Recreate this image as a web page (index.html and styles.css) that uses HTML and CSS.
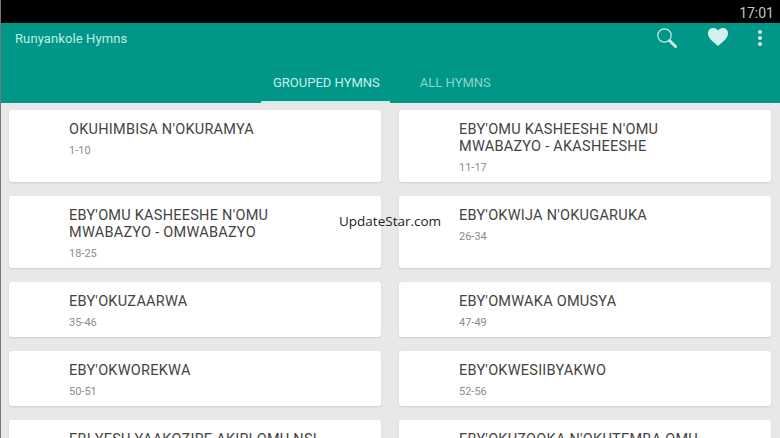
FILE: index.html
```html
<!DOCTYPE html>
<html lang="en">
<head>
    <meta charset="UTF-8">
    <meta name="viewport" content="width=device-width, initial-scale=1.0">
    <title>Runyankole Hymns</title>
    <link rel="stylesheet" href="styles.css">
</head>
<body>
    <div class="status-bar">
        <span class="clock">17:01</span>
    </div>

    <header class="app-bar">
        <div class="toolbar">
            <span class="app-title">Runyankole Hymns</span>
            <div class="actions">
                <svg class="icon-search" viewBox="0 0 20 20" width="20" height="20">
                    <circle cx="7.5" cy="7.5" r="6.7" fill="none" stroke="#c8ebe6" stroke-width="1.2"/>
                    <path d="M12.5 12.5 L18.5 18.5" stroke="#c8ebe6" stroke-width="3" stroke-linecap="round"/>
                </svg>
                <svg class="icon-heart" viewBox="0 0 20 18" width="20" height="18">
                    <path d="M10 18 C4 13 0 10 0 5.2 C0 2 2.4 0 5.2 0 C7.2 0 9 1 10 2.8 C11 1 12.8 0 14.8 0 C17.6 0 20 2 20 5.2 C20 10 16 13 10 18 Z" fill="#d4f0ec"/>
                </svg>
                <div class="icon-more">
                    <span class="dot"></span>
                    <span class="dot"></span>
                    <span class="dot"></span>
                </div>
            </div>
        </div>
        <nav class="tabs">
            <a class="tab tab-active">GROUPED HYMNS</a>
            <a class="tab">ALL HYMNS</a>
        </nav>
    </header>

    <main class="hymn-grid">
        <div class="card card-tall">
            <div class="card-title">OKUHIMBISA N'OKURAMYA</div>
            <div class="card-range">1-10</div>
        </div>
        <div class="card card-tall">
            <div class="card-title">EBY'OMU KASHEESHE N'OMU MWABAZYO - AKASHEESHE</div>
            <div class="card-range">11-17</div>
        </div>
        <div class="card card-tall">
            <div class="card-title">EBY'OMU KASHEESHE N'OMU MWABAZYO - OMWABAZYO</div>
            <div class="card-range">18-25</div>
        </div>
        <div class="card card-tall">
            <div class="card-title">EBY'OKWIJA N'OKUGARUKA</div>
            <div class="card-range">26-34</div>
        </div>
        <div class="card">
            <div class="card-title">EBY'OKUZAARWA</div>
            <div class="card-range">35-46</div>
        </div>
        <div class="card">
            <div class="card-title">EBY'OMWAKA OMUSYA</div>
            <div class="card-range">47-49</div>
        </div>
        <div class="card">
            <div class="card-title">EBY'OKWOREKWA</div>
            <div class="card-range">50-51</div>
        </div>
        <div class="card">
            <div class="card-title">EBY'OKWESIIBYAKWO</div>
            <div class="card-range">52-56</div>
        </div>
        <div class="card">
            <div class="card-title">EBI YESU YAAKOZIRE AKIRI OMU NSI</div>
        </div>
        <div class="card">
            <div class="card-title">EBY'OKUZOOKA N'OKUTEMBA OMU</div>
        </div>
    </main>

    <div class="watermark">UpdateStar.com</div>
</body>
</html>
```

FILE: styles.css
```css
* {
    margin: 0;
    padding: 0;
    box-sizing: border-box;
}

html, body {
    height: 438px;
    overflow: hidden;
}

body {
    font-family: 'Roboto', 'Liberation Sans', sans-serif;
    background: #e8e8e8;
    border-left: 1px solid #777;
    position: relative;
}

.status-bar {
    height: 23px;
    background: #000;
    margin-left: -1px;
    display: flex;
    align-items: center;
    justify-content: flex-end;
    padding-right: 6px;
}

.clock {
    color: #c4c4c4;
    font-size: 14px;
    padding-top: 3px;
}

.app-bar {
    height: 80px;
    background: #009688;
    display: flex;
    flex-direction: column;
    justify-content: space-between;
}

.toolbar {
    display: flex;
    justify-content: space-between;
    padding: 8px 18px 0 14px;
}

.app-title {
    color: #c0efe8;
    font-size: 13px;
    line-height: 15px;
    letter-spacing: 0.1px;
}

.actions {
    display: flex;
    align-items: flex-start;
}

.icon-search {
    margin-top: -3px;
    margin-right: 31px;
}

.icon-heart {
    margin-top: -3px;
    margin-right: 30px;
}

.icon-more {
    display: flex;
    flex-direction: column;
    gap: 2px;
    margin-top: -1px;
}

.dot {
    width: 4px;
    height: 4px;
    border-radius: 50%;
    background: #d4f0ec;
}

.tabs {
    display: flex;
    padding-left: 260px;
}

.tab {
    font-size: 13px;
    line-height: 15px;
    color: #8fd4ca;
    padding: 0 10px 11px 12px;
    border-bottom: 2px solid transparent;
    margin-right: 18px;
}

.tab-active {
    color: #c8f0ea;
    border-bottom-color: #c8f0ea;
}

.hymn-grid {
    display: grid;
    grid-template-columns: 372px 372px;
    column-gap: 18px;
    row-gap: 14px;
    padding: 7px 0 0 8px;
}

.card {
    background: #fff;
    height: 55px;
    border-radius: 3px;
    box-shadow: 0 1px 2px rgba(0, 0, 0, 0.12);
    padding: 11px 60px 0 60px;
}

.card-tall {
    height: 72px;
}

.card-title {
    font-size: 14.5px;
    line-height: 17px;
    letter-spacing: 0.25px;
    color: #444;
}

.card-range {
    font-size: 11px;
    line-height: 13px;
    color: #8c8c8c;
    margin-top: 6px;
}

.watermark {
    position: absolute;
    left: 338px;
    top: 212px;
    font-family: 'Open Sans', 'Liberation Sans', sans-serif;
    font-size: 13.5px;
    color: #222;
}
```
